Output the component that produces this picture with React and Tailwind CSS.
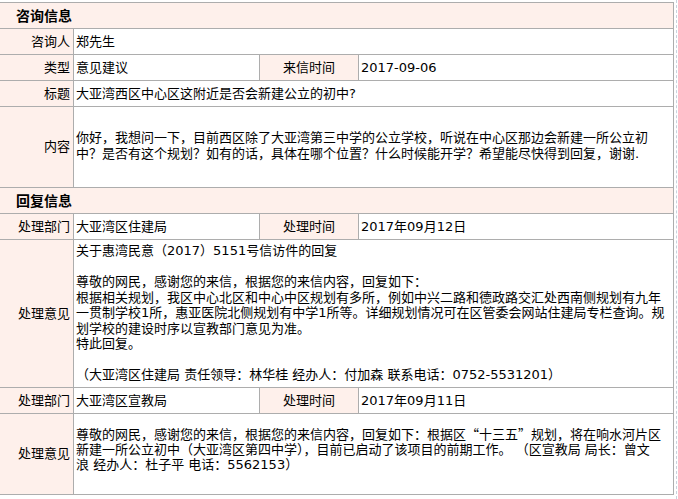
import React from "react";

const line = "border-[#adadad]";

const Label = ({ children, center, className = "" }) => (
  <div
    className={`flex items-center ${center ? "justify-center" : "justify-end pr-[3px]"} bg-[#fef0eb] border-r border-b ${line} whitespace-nowrap ${className}`}
  >
    {children}
  </div>
);

const Value = ({ children, className = "" }) => (
  <div className={`flex items-center pl-[2px] bg-white border-r border-b ${line} whitespace-nowrap ${className}`}>
    {children}
  </div>
);

const Section = ({ title }) => (
  <div className={`col-span-4 h-[26px] flex items-center pl-4 bg-[#fef0eb] border-r border-b ${line}`}>
    <span className="text-[14px] font-bold">{title}</span>
  </div>
);

const Q = ({ children }) => <span className="font-['Noto_Sans_CJK_SC',sans-serif]">{children}</span>;

export default function App() {
  return (
    <div className="flex min-h-[499px] bg-white text-black text-[13px] leading-[16px] font-['DejaVu_Sans','Noto_Sans_CJK_SC',sans-serif]">
      <div className={`mt-[2px] self-start grid grid-cols-[74px_186px_99px_315px] border-t ${line}`}>
        {/* 咨询信息 */}
        <Section title="咨询信息" />

        <Label className="h-[26px]">咨询人</Label>
        <Value className="col-span-3">郑先生</Value>

        <Label className="h-[26px]">类型</Label>
        <Value>意见建议</Value>
        <Label center>来信时间</Label>
        <Value>2017-09-06</Value>

        <Label className="h-[26px]">标题</Label>
        <Value className="col-span-3">大亚湾西区中心区这附近是否会新建公立的初中?</Value>

        <Label className="h-[81px]">内容</Label>
        <Value className="col-span-3">
          <div className="pb-[3px]">
            你好，我想问一下，目前西区除了大亚湾第三中学的公立学校，听说在中心区那边会新建一所公立初
            <br />
            中？是否有这个规划？如有的话，具体在哪个位置？什么时候能开学？希望能尽快得到回复，谢谢.
          </div>
        </Value>

        {/* 回复信息 */}
        <Section title="回复信息" />

        <Label className="h-[26px]">处理部门</Label>
        <Value>大亚湾区住建局</Value>
        <Label center>处理时间</Label>
        <Value>2017年09月12日</Value>

        <Label className="h-[148px]">处理意见</Label>
        <Value className="col-span-3 !items-start">
          <div className="pt-[3px] leading-[15.5px]">
            关于惠湾民意（2017）5151号信访件的回复
            <br />
            <br />
            尊敬的网民，感谢您的来信，根据您的来信内容，回复如下：
            <br />
            根据相关规划，我区中心北区和中心中区规划有多所，例如中兴二路和德政路交汇处西南侧规划有九年
            <br />
            一贯制学校1所，惠亚医院北侧规划有中学1所等。详细规划情况可在区管委会网站住建局专栏查询。规
            <br />
            划学校的建设时序以宣教部门意见为准。
            <br />
            特此回复。
            <br />
            <br />
            （大亚湾区住建局 责任领导：林华桂 经办人：付加森 联系电话：0752-5531201）
          </div>
        </Value>

        <Label className="h-[26px]">处理部门</Label>
        <Value>大亚湾区宣教局</Value>
        <Label center>处理时间</Label>
        <Value>2017年09月11日</Value>

        <Label className="h-[81px]">处理意见</Label>
        <Value className="col-span-3 !items-start">
          <div className="pt-[12px] leading-[15px]">
            尊敬的网民，感谢您的来信，根据您的来信内容，回复如下：根据区<Q>“</Q>十三五<Q>”</Q>规划，将在响水河片区
            <br />
            新建一所公立初中（大亚湾区第四中学），目前已启动了该项目的前期工作。 （区宣教局 局长：曾文
            <br />
            浪 经办人：杜子平 电话：5562153）
          </div>
        </Value>
      </div>
      <div className="w-[2px]" />
      <div className="border-l border-dashed border-[#c9d2de]" />
    </div>
  );
}
